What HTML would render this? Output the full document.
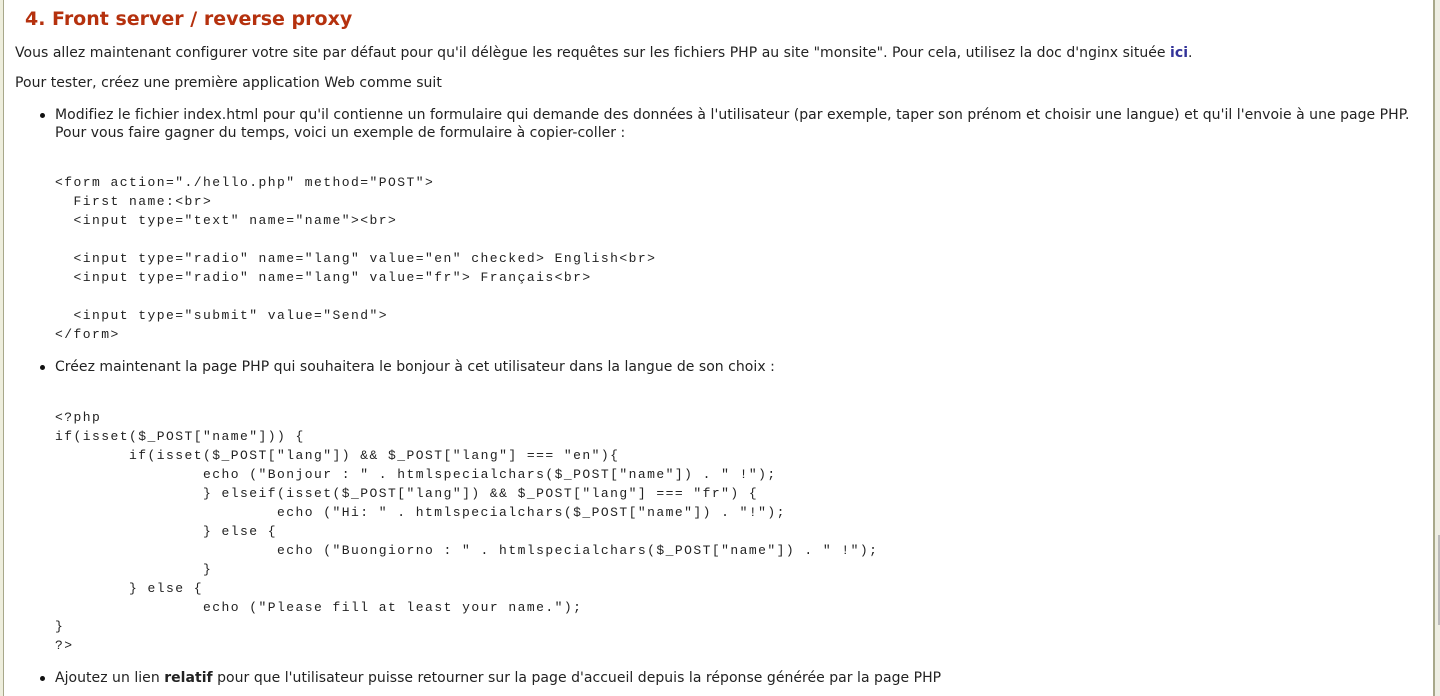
<!DOCTYPE html>
<html><head><meta charset="utf-8"><style>
html,body{margin:0;padding:0;width:1440px;height:696px;overflow:hidden;background:#fff}
body{position:relative;font-family:"DejaVu Sans","Liberation Sans",sans-serif;font-size:14px;color:#222}
.lb{position:absolute;left:0;top:0;width:3px;height:696px;background:#eeeedd;border-right:1px solid #a8a88a}
.rb{position:absolute;left:1433px;top:0;width:7px;height:696px;background:#eeeee4;border-left:2px solid #a8a88a;box-sizing:border-box}
.sb{position:absolute;left:1438px;top:535px;width:2px;height:90px;background:#bbb}
.t{position:absolute;white-space:nowrap;line-height:18px;letter-spacing:0.03px}
h1{position:absolute;left:25px;top:6px;margin:0;font-size:19px;font-weight:bold;color:#b5310e;line-height:26px}
pre{position:absolute;left:55px;margin:0;font-family:"Liberation Mono",monospace;font-size:13px;letter-spacing:1.45px;line-height:19px;color:#222;tab-size:8}
.dot{position:absolute;left:40px;width:5px;height:5px;border-radius:50%;background:#111}
a{color:#333399;font-weight:bold;text-decoration:none}
</style></head><body>
<div class="lb"></div><div class="rb"></div><div class="sb"></div>
<h1>4. Front server / reverse proxy</h1>
<div class="t" style="left:15px;top:44px">Vous allez maintenant configurer votre site par défaut pour qu'il délègue les requêtes sur les fichiers PHP au site "monsite". Pour cela, utilisez la doc d'nginx située <a>ici</a>.</div>
<div class="t" style="left:15px;top:74px">Pour tester, créez une première application Web comme suit</div>
<div class="dot" style="top:113px"></div>
<div class="t" style="left:55px;top:106px">Modifiez le fichier index.html pour qu'il contienne un formulaire qui demande des données à l'utilisateur (par exemple, taper son prénom et choisir une langue) et qu'il l'envoie à une page PHP.</div>
<div class="t" style="left:55px;top:124px">Pour vous faire gagner du temps, voici un exemple de formulaire à copier-coller :</div>
<pre style="top:173px">&lt;form action="./hello.php" method="POST"&gt;
  First name:&lt;br&gt;
  &lt;input type="text" name="name"&gt;&lt;br&gt;

  &lt;input type="radio" name="lang" value="en" checked&gt; English&lt;br&gt;
  &lt;input type="radio" name="lang" value="fr"&gt; Français&lt;br&gt;

  &lt;input type="submit" value="Send"&gt;
&lt;/form&gt;</pre>
<div class="dot" style="top:365px"></div>
<div class="t" style="left:55px;top:358px">Créez maintenant la page PHP qui souhaitera le bonjour à cet utilisateur dans la langue de son choix :</div>
<pre style="top:408px">&lt;?php
if(isset($_POST["name"])) {
	if(isset($_POST["lang"]) &amp;&amp; $_POST["lang"] === "en"){
		echo ("Bonjour : " . htmlspecialchars($_POST["name"]) . " !");
		} elseif(isset($_POST["lang"]) &amp;&amp; $_POST["lang"] === "fr") {
			echo ("Hi: " . htmlspecialchars($_POST["name"]) . "!");
		} else {
			echo ("Buongiorno : " . htmlspecialchars($_POST["name"]) . " !");
		}
	} else {
		echo ("Please fill at least your name.");
}
?&gt;</pre>
<div class="dot" style="top:676px"></div>
<div class="t" style="left:55px;top:669px">Ajoutez un lien <b>relatif</b> pour que l'utilisateur puisse retourner sur la page d'accueil depuis la réponse générée par la page PHP</div>
</body></html>
